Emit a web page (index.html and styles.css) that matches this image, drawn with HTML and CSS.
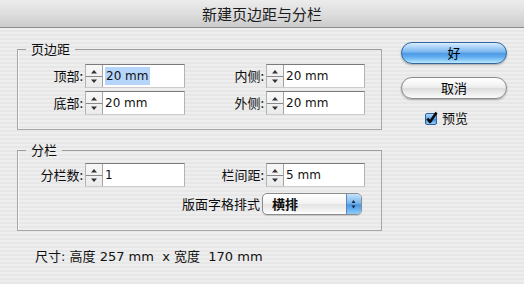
FILE: index.html
```html
<!DOCTYPE html>
<html lang="zh-CN">
<head>
<meta charset="utf-8">
<title>新建页边距与分栏</title>
<link rel="stylesheet" href="styles.css">
</head>
<body>
<div class="window">
  <div class="titlebar">新建页边距与分栏</div>
  <div class="main">
    <div class="left">
      <fieldset class="group g1">
        <legend>页边距</legend>
        <div class="grid">
          <span class="lbl">顶部:</span>
          <div class="field">
            <span class="spin"><svg width="16" height="22" viewBox="0 0 16 22"><path d="M5 8.5h6L8 5z" fill="#333"/><path d="M0 11.5h16" stroke="#8a8a8a" stroke-width="1"/><path d="M5 14.5h6L8 18z" fill="#333"/></svg></span>
            <span class="val"><span class="sel">20 mm</span></span>
          </div>
          <span class="lbl">内侧:</span>
          <div class="field">
            <span class="spin"><svg width="16" height="22" viewBox="0 0 16 22"><path d="M5 8.5h6L8 5z" fill="#333"/><path d="M0 11.5h16" stroke="#8a8a8a" stroke-width="1"/><path d="M5 14.5h6L8 18z" fill="#333"/></svg></span>
            <span class="val">20 mm</span>
          </div>
          <span class="lbl">底部:</span>
          <div class="field">
            <span class="spin"><svg width="16" height="22" viewBox="0 0 16 22"><path d="M5 8.5h6L8 5z" fill="#333"/><path d="M0 11.5h16" stroke="#8a8a8a" stroke-width="1"/><path d="M5 14.5h6L8 18z" fill="#333"/></svg></span>
            <span class="val">20 mm</span>
          </div>
          <span class="lbl">外侧:</span>
          <div class="field">
            <span class="spin"><svg width="16" height="22" viewBox="0 0 16 22"><path d="M5 8.5h6L8 5z" fill="#333"/><path d="M0 11.5h16" stroke="#8a8a8a" stroke-width="1"/><path d="M5 14.5h6L8 18z" fill="#333"/></svg></span>
            <span class="val">20 mm</span>
          </div>
        </div>
      </fieldset>
      <fieldset class="group g2">
        <legend>分栏</legend>
        <div class="grid grid2">
          <span class="lbl">分栏数:</span>
          <div class="field">
            <span class="spin"><svg width="16" height="22" viewBox="0 0 16 22"><path d="M5 8.5h6L8 5z" fill="#333"/><path d="M0 11.5h16" stroke="#8a8a8a" stroke-width="1"/><path d="M5 14.5h6L8 18z" fill="#333"/></svg></span>
            <span class="val">1</span>
          </div>
          <span class="lbl">栏间距:</span>
          <div class="field">
            <span class="spin"><svg width="16" height="22" viewBox="0 0 16 22"><path d="M5 8.5h6L8 5z" fill="#333"/><path d="M0 11.5h16" stroke="#8a8a8a" stroke-width="1"/><path d="M5 14.5h6L8 18z" fill="#333"/></svg></span>
            <span class="val">5 mm</span>
          </div>
          <span class="lbl lbl-wide">版面字格排式</span>
          <div class="popup">
            <span class="popup-text">横排</span>
            <span class="popup-arrows"><svg width="14" height="20" viewBox="0 0 14 20"><path d="M4.5 9h4L6.5 6z" fill="#1b2a44"/><path d="M4.5 11.5h4L6.5 14.5z" fill="#1b2a44"/></svg></span>
          </div>
        </div>
      </fieldset>
      <div class="size">尺寸: 高度 257 mm&nbsp; x 宽度&nbsp; 170 mm</div>
    </div>
    <div class="right">
      <button class="btn btn-default">好</button>
      <button class="btn btn-cancel">取消</button>
      <div class="check">
        <svg class="checkbox" width="14" height="14" viewBox="0 0 14 14">
          <defs>
            <linearGradient id="cbg" x1="0" y1="0" x2="0" y2="1">
              <stop offset="0" stop-color="#b9dcfb"/>
              <stop offset="0.45" stop-color="#6aaeee"/>
              <stop offset="0.55" stop-color="#3f8fe0"/>
              <stop offset="1" stop-color="#9fd6fb"/>
            </linearGradient>
          </defs>
          <rect x="1.5" y="2.5" width="11" height="11" rx="1.5" fill="url(#cbg)" stroke="#2f5f9e"/>
          <path d="M3.5 7.5 L6 11 L12.5 1.5" fill="none" stroke="#0d0d0d" stroke-width="2.6" stroke-linejoin="round"/>
        </svg>
        <span>预览</span>
      </div>
    </div>
  </div>
</div>
</body>
</html>
```

FILE: styles.css
```css
html, body {
  margin: 0;
  padding: 0;
}

body {
  width: 524px;
  height: 284px;
  overflow: hidden;
  font-family: "Noto Sans CJK SC", sans-serif;
  font-size: 13px;
  color: #0d0d0d;
  background: repeating-linear-gradient(to bottom, #eeeeee 0, #eeeeee 2px, #e7e7e7 2px, #e7e7e7 4px);
}

.window {
  width: 524px;
  height: 284px;
}

.titlebar {
  height: 27px;
  line-height: 27px;
  border-bottom: 1px solid #8d8d8d;
  background: linear-gradient(to bottom, #ececec 0%, #dedede 50%, #cbcbcb 100%);
  text-align: center;
  font-size: 15px;
  color: #1c1c1c;
}

.main {
  display: flex;
  padding: 12px 0 0 17px;
}

.left {
  width: 365px;
}

.group {
  margin: 0;
  padding: 0;
  min-width: 0;
  border: 1px solid #a7a7a7;
  border-top-color: #9c9c9c;
  box-shadow: inset 1px 0 0 #f8f8f8;
}

.group legend {
  margin-left: 8px;
  padding: 0 5px;
  line-height: 18px;
  font-size: 13px;
}

.g1 {
  padding: 6px 0 14px 0;
}

.g2 {
  margin-top: 11px;
  padding: 4px 0 15px 0;
}

.grid {
  display: grid;
  grid-template-columns: 65px 100px 77px 99px;
  column-gap: 2px;
  row-gap: 3px;
  align-items: center;
}

.grid2 {
  row-gap: 6px;
}

.lbl {
  justify-self: end;
  white-space: nowrap;
  line-height: 18px;
}

.lbl-wide {
  grid-column: 1 / 4;
  margin-right: 4px;
}

.field {
  display: flex;
  height: 24px;
  box-sizing: border-box;
  background: #fff;
  border: 1px solid #b3b3b3;
  border-top-color: #7a7a7a;
  border-bottom-color: #cccccc;
}

.spin {
  display: block;
  width: 16px;
  height: 22px;
  border-right: 1px solid #a3a3a3;
  background: linear-gradient(to bottom, #f7f7f7, #ebebeb);
}

.spin svg {
  display: block;
}

.val {
  padding-left: 2px;
  line-height: 22px;
  font-family: "DejaVu Sans", sans-serif;
  font-size: 12px;
  color: #111;
  white-space: nowrap;
}

.sel {
  display: inline-block;
  line-height: 18px;
  padding: 0 2px 0 1px;
  background: #b6d5fa;
}

.popup {
  margin-left: -4px;
  width: 100px;
  height: 22px;
  box-sizing: border-box;
  display: flex;
  align-items: center;
  border: 1px solid #8c8c8c;
  border-radius: 5px;
  background: linear-gradient(to bottom, #ffffff 0%, #f3f3f3 48%, #e4e4e4 52%, #f4f4f4 85%, #ffffff 100%);
  box-shadow: 0 1px 1px rgba(0, 0, 0, 0.15);
  overflow: hidden;
}

.popup-text {
  padding-left: 9px;
  font-weight: 600;
  line-height: 18px;
}

.popup-arrows {
  margin-left: auto;
  width: 14px;
  height: 20px;
  border-left: 1px solid #5b86bd;
  background: linear-gradient(to bottom, #c5e2fb 0%, #7ab8ef 45%, #4996e4 55%, #8ccdf8 100%);
}

.popup-arrows svg {
  display: block;
}

.size {
  margin-top: 17px;
  padding-left: 18px;
  line-height: 18px;
  font-family: "DejaVu Sans", "Noto Sans CJK SC", sans-serif;
  font-size: 13px;
  white-space: nowrap;
  color: #111;
}

.right {
  margin-left: 19px;
  padding-top: 2px;
  width: 106px;
  display: flex;
  flex-direction: column;
}

.btn {
  display: block;
  width: 106px;
  height: 22px;
  padding: 0;
  margin: 0;
  border-radius: 11px;
  font-family: "Noto Sans CJK SC", sans-serif;
  font-size: 13px;
  line-height: 20px;
  color: #000;
  text-align: center;
  box-shadow: 0 1px 2px rgba(0, 0, 0, 0.3);
}

.btn-default {
  border: 1px solid #35649f;
  background: linear-gradient(to bottom, #d9eefe 0%, #a9d2f7 22%, #76b5ef 46%, #4f9be6 52%, #5eaaee 68%, #8ccdf7 86%, #bfe8fd 100%);
}

.btn-cancel {
  margin-top: 13px;
  border: 1px solid #8a8a8a;
  background: linear-gradient(to bottom, #ffffff 0%, #f6f6f6 30%, #ebebeb 48%, #dcdcdc 52%, #ececec 75%, #fbfbfb 100%);
}

.check {
  display: flex;
  align-items: center;
  margin-top: 10px;
  margin-left: 23px;
  height: 18px;
  line-height: 18px;
}

.checkbox {
  display: block;
  margin-right: 4px;
}
```
